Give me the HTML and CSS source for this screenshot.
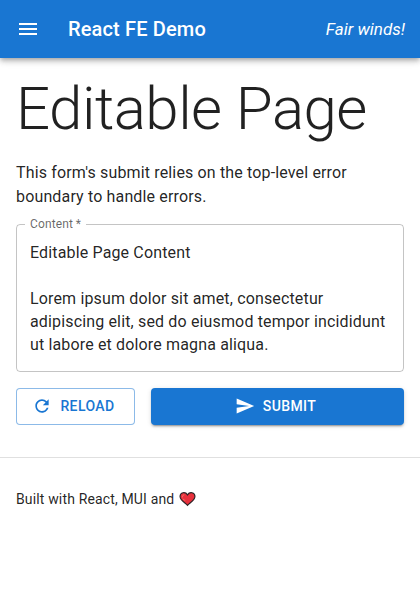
FILE: index.html
```html
<!DOCTYPE html>
<html lang="en">
<head>
<meta charset="utf-8">
<title>React FE Demo</title>
<link rel="stylesheet" href="styles.css">
</head>
<body>
<header class="appbar">
  <svg class="menu-icon" viewBox="0 0 24 24"><path d="M3 18h18v-2H3v2zm0-5h18v-2H3v2zm0-7v2h18V6H3z"/></svg>
  <div class="brand">React FE Demo</div>
  <div class="greeting">Fair winds!</div>
</header>
<main class="content">
  <h1 class="title">Editable Page</h1>
  <p class="intro">This form's submit relies on the top-level error boundary to handle errors.</p>
  <fieldset class="field">
    <legend class="field-label">Content&#8201;*</legend>
    <div class="field-text">Editable Page Content

Lorem ipsum dolor sit amet, consectetur adipiscing elit, sed do eiusmod tempor incididunt ut labore et dolore magna aliqua.</div>
  </fieldset>
  <div class="actions">
    <button class="button outlined"><svg class="button-icon" viewBox="0 0 24 24"><path d="M17.65 6.35C16.2 4.9 14.21 4 12 4c-4.42 0-7.99 3.58-7.99 8s3.57 8 7.99 8c3.73 0 6.84-2.55 7.73-6h-2.08c-.82 2.33-3.04 4-5.65 4-3.31 0-6-2.69-6-6s2.69-6 6-6c1.66 0 3.14.69 4.22 1.78L13 11h7V4l-2.35 2.35z"/></svg>Reload</button>
    <button class="button contained"><svg class="button-icon" viewBox="0 0 24 24"><path d="M2.01 21 23 12 2.01 3 2 10l15 2-15 2z"/></svg>Submit</button>
  </div>
</main>
<footer class="footer">Built with React, MUI and <svg class="heart" viewBox="0 0 18 16"><path class="heart-fill" d="M9 14.7C7 12.2 1.1 9.5 1.1 5.3C1.1 1 6.6-.2 9 3.6C11.4-.2 16.9 1 16.9 5.3C16.9 9.5 11 12.2 9 14.7Z"/><path class="heart-shine" d="M3.6 5.8C3.6 4.4 4.3 3.8 5.2 3.7M4.5 8L6 9.5"/></svg></footer>
</body>
</html>
```
FILE: styles.css
```css
* { box-sizing: border-box; }
body {
  margin: 0;
  background: #fff;
  color: rgba(0, 0, 0, 0.87);
  font-family: Roboto, "Liberation Sans", sans-serif;
  font-size: 16px;
  line-height: 24px;
  letter-spacing: 0.15008px;
}
.appbar {
  display: flex;
  align-items: center;
  height: 58px;
  padding: 0 15px 0 16px;
  background: #1976d2;
  color: #fff;
  box-shadow: 0 2px 4px -1px rgba(0,0,0,.2), 0 4px 5px rgba(0,0,0,.14), 0 1px 10px rgba(0,0,0,.12);
}
.menu-icon { width: 24px; height: 24px; margin-right: 28px; fill: currentColor; }
.brand { flex: 1; font-size: 20px; font-weight: 500; line-height: 32px; }
.greeting { font-size: 17px; font-style: italic; letter-spacing: 0; }
.content { padding: 0 16px 32px; }
.title {
  margin: 15px 0 0;
  font-size: 60px;
  font-weight: 300;
  line-height: 72px;
  letter-spacing: -0.5px;
}
.intro { margin: 16px 0 9px; }
.field {
  height: 154px;
  margin: 0;
  padding: 0 13px;
  border: 1px solid rgba(0,0,0,.23);
  border-radius: 4px;
}
.field-label {
  margin-left: -5px;
  padding: 0 5px;
  font-size: 12px;
  line-height: 12px;
  color: rgba(0,0,0,.6);
}
.field-text { padding-top: 11px; line-height: 23px; white-space: pre-wrap; }
.actions { display: flex; gap: 16px; margin-top: 16px; }
.button {
  display: flex;
  align-items: center;
  justify-content: center;
  gap: 8px;
  height: 37px;
  padding: 0 0 1px;
  border: 0;
  border-radius: 4px;
  font: 500 14px/24px Roboto, sans-serif;
  letter-spacing: 0.4px;
  text-transform: uppercase;
}
.button-icon { width: 20px; height: 20px; margin-left: -4px; fill: currentColor; }
.outlined { width: 119px; border: 1px solid rgba(25,118,210,.5); background: #fff; color: #1976d2; }
.contained {
  flex: 1;
  background: #1976d2;
  color: #fff;
  box-shadow: 0 3px 1px -2px rgba(0,0,0,.2), 0 2px 2px rgba(0,0,0,.14), 0 1px 5px rgba(0,0,0,.12);
}
.footer {
  display: flex;
  align-items: center;
  gap: 5px;
  padding: 31px 16px;
  border-top: 1px solid rgba(0,0,0,.12);
  font-size: 14px;
  line-height: 20px;
}
.heart { width: 17px; height: 16px; }
.heart-fill { fill: #e8303c; stroke: #2b2326; stroke-width: 1.2; }
.heart-shine { fill: none; stroke: #f08070; stroke-width: 1; stroke-linecap: round; }
```
